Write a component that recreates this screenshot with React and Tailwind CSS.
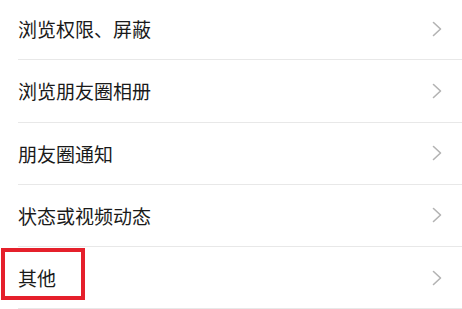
const items = ["浏览权限、屏蔽", "浏览朋友圈相册", "朋友圈通知", "状态或视频动态", "其他"];

function Chevron() {
    return (
        <svg width="10" height="16" viewBox="0 0 10 16" className="shrink-0">
            <polyline points="1.5,1.5 8.5,8 1.5,14.5" fill="none" stroke="#b3b3b3" strokeWidth="1.6" strokeLinecap="round" strokeLinejoin="round" />
        </svg>
    );
}

export default function App() {
    return (
        <div className="h-[309px] w-[462px] overflow-hidden bg-white font-['Noto_Sans_CJK_SC',sans-serif]">
            <div className="-mt-[2px]">
                {items.map((label, index) => (
                    <div key={index} className="relative h-[62.25px] pl-[18px]">
                        <div className="flex h-[61.25px] items-center justify-between pr-[20px]">
                            <span className="text-[19px] leading-none text-[#1a1a1a]">{label}</span>
                            <Chevron />
                        </div>
                        <div className="h-px bg-[#e8e8e8]" />
                        {label === "其他" && (
                            <div className="absolute left-[1px] top-[1px] h-[52px] w-[84px] border-[4px] border-[#e5202b]" />
                        )}
                    </div>
                ))}
            </div>
        </div>
    );
}
